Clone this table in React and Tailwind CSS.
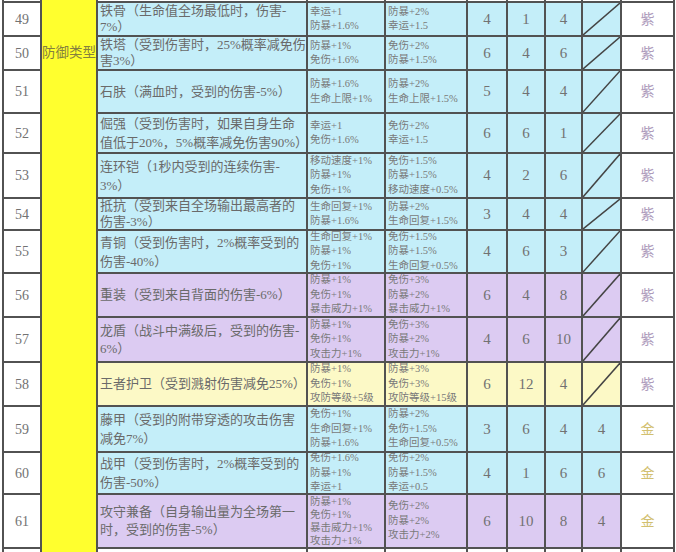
const CYAN = "bg-[#c4eef9]"
const PURPLE = "bg-[#dccbf2]"
const YELLOW = "bg-[#fcf9c6]"

const rows = [
  { n: 49, bg: CYAN, lh: "leading-[16px]", d: ["铁骨（生命值全场最低时，伤害-", "7%）"], a: ["幸运+1", "防暴+1.6%"], b: ["防暴+2%", "幸运+1.5"], v: [4, 1, 4], x: null, g: "紫" },
  { n: 50, bg: CYAN, lh: "leading-[16px]", d: ["铁塔（受到伤害时，25%概率减免伤", "害3%）"], a: ["防暴+1%", "免伤+1.6%"], b: ["免伤+2%", "防暴+1.5%"], v: [6, 4, 6], x: null, g: "紫" },
  { n: 51, bg: CYAN, lh: "leading-[18px]", d: ["石肤（满血时，受到的伤害-5%）"], a: ["防暴+1.6%", "生命上限+1%"], b: ["防暴+2%", "生命上限+1.5%"], v: [5, 4, 4], x: null, g: "紫" },
  { n: 52, bg: CYAN, lh: "leading-[19px]", d: ["倔强（受到伤害时，如果自身生命", "值低于20%，5%概率减免伤害90%）"], a: ["幸运+1", "免伤+1.6%"], b: ["免伤+2%", "幸运+1.5"], v: [6, 6, 1], x: null, g: "紫" },
  { n: 53, bg: CYAN, lh: "leading-[19px]", d: ["连环铠（1秒内受到的连续伤害-", "3%）"], a: ["移动速度+1%", "防暴+1%", "免伤+1%"], b: ["免伤+1.5%", "防暴+1.5%", "移动速度+0.5%"], v: [4, 2, 6], x: null, g: "紫" },
  { n: 54, bg: CYAN, lh: "leading-[16px]", d: ["抵抗（受到来自全场输出最高者的", "伤害-3%）"], a: ["生命回复+1%", "防暴+1.6%"], b: ["防暴+2%", "生命回复+1.5%"], v: [3, 4, 4], x: null, g: "紫" },
  { n: 55, bg: CYAN, lh: "leading-[19px]", d: ["青铜（受到伤害时，2%概率受到的", "伤害-40%）"], a: ["生命回复+1%", "防暴+1%", "免伤+1%"], b: ["免伤+1.5%", "防暴+1.5%", "生命回复+0.5%"], v: [4, 6, 3], x: null, g: "紫" },
  { n: 56, bg: PURPLE, lh: "leading-[18px]", d: ["重装（受到来自背面的伤害-6%）"], a: ["防暴+1%", "免伤+1%", "暴击威力+1%"], b: ["免伤+3%", "防暴+2%", "暴击威力+1%"], v: [6, 4, 8], x: null, g: "紫" },
  { n: 57, bg: PURPLE, lh: "leading-[18px]", d: ["龙盾（战斗中满级后，受到的伤害-", "6%）"], a: ["防暴+1%", "免伤+1%", "攻击力+1%"], b: ["免伤+3%", "防暴+2%", "攻击力+1%"], v: [4, 6, 10], x: null, g: "紫" },
  { n: 58, bg: YELLOW, lh: "leading-[18px]", d: ["王者护卫（受到溅射伤害减免25%）"], a: ["防暴+1%", "免伤+1%", "攻防等级+5级"], b: ["防暴+3%", "免伤+3%", "攻防等级+15级"], v: [6, 12, 4], x: null, g: "紫" },
  { n: 59, bg: CYAN, lh: "leading-[19px]", d: ["藤甲（受到的附带穿透的攻击伤害", "减免7%）"], a: ["免伤+1%", "生命回复+1%", "防暴+1.6%"], b: ["防暴+2%", "免伤+1.5%", "生命回复+0.5%"], v: [3, 6, 4], x: 4, g: "金" },
  { n: 60, bg: CYAN, lh: "leading-[19px]", d: ["战甲（受到伤害时，2%概率受到的", "伤害-50%）"], a: ["免伤+1.6%", "防暴+1%", "幸运+1"], b: ["免伤+2%", "防暴+1.5%", "幸运+0.5"], v: [4, 1, 6], x: 6, g: "金" },
  { n: 61, bg: PURPLE, lh: "leading-[18px]", d: ["攻守兼备（自身输出量为全场第一", "时，受到的伤害-5%）"], a: ["防暴+1%", "免伤+1%", "暴击威力+1%", "攻击力+1%"], b: ["免伤+2%", "防暴+2%", "攻击力+2%"], v: [6, 10, 8], x: 4, g: "金" },
]

function Lines({ items, className }) {
  return (
    <div className={className}>
      {items.map((t, i) => (
        <div key={i} className="whitespace-nowrap">{t}</div>
      ))}
    </div>
  )
}

function Num({ bg, children }) {
  return (
    <div className={`${bg} flex items-center justify-center text-[15px] text-[#727272]`}>{children}</div>
  )
}

function Slash({ bg }) {
  return (
    <div className={bg}>
      <svg className="block w-full h-full" viewBox="0 0 100 100" preserveAspectRatio="none">
        <line x1="0" y1="100" x2="100" y2="0" stroke="#444" strokeWidth="1.5" vectorEffect="non-scaling-stroke" />
      </svg>
    </div>
  )
}

function Row({ r }) {
  const statLead = r.a.length > 3 ? "leading-[13px]" : "leading-[14.5px]"
  return (
    <>
      <div className="bg-white flex items-center justify-center text-[14px] text-[#727272]">{r.n}</div>
      <div className={`${r.bg} flex items-center pl-[2px]`}>
        <Lines items={r.d} className={`text-[13px] ${r.lh} text-[#6a6a6a]`} />
      </div>
      <div className={`${r.bg} flex items-center pl-[2px] overflow-hidden`}>
        <Lines items={r.a} className={`text-[10.5px] ${statLead} text-[#7a7a7a]`} />
      </div>
      <div className={`${r.bg} flex items-center pl-[2px] overflow-hidden`}>
        <Lines items={r.b} className="text-[10.5px] leading-[14.5px] text-[#7a7a7a]" />
      </div>
      <Num bg={r.bg}>{r.v[0]}</Num>
      <Num bg={r.bg}>{r.v[1]}</Num>
      <Num bg={r.bg}>{r.v[2]}</Num>
      {r.x === null ? <Slash bg={r.bg} /> : <Num bg={r.bg}>{r.x}</Num>}
      <div
        className={`bg-white flex items-center justify-center text-[14px] ${
          r.g === "紫" ? "text-[#ae9cbc]" : "text-[#d2c070]"
        }`}
      >
        {r.g}
      </div>
    </>
  )
}

export default function App() {
  const blanks = Array.from({ length: 9 })
  return (
    <div className="w-[676px] h-[552px] overflow-hidden bg-white [font-family:'Liberation_Serif','Noto_Sans_CJK_SC',serif]">
      <div className="ml-[2px] w-[673px] px-[2px] bg-[#525252] grid gap-[2px] grid-cols-[36px_54px_208px_76px_80px_38px_36px_35px_37px_51px] grid-rows-[1px_32px_32px_41px_38px_43px_30px_41px_42px_43px_42px_44px_40px_52px_40px]">
        {/* category column spans every row */}
        <div className="col-start-2 row-[1/16] bg-[#ffff2e] flex justify-center pt-[45px]">
          <span className="whitespace-nowrap text-[13.5px] leading-[16px] text-[#85803e]">防御类型</span>
        </div>

        {blanks.map((_, i) => (
          <div key={`top-${i}`} className="bg-white" />
        ))}

        {rows.map((r) => (
          <Row key={r.n} r={r} />
        ))}

        {blanks.map((_, i) => (
          <div key={`end-${i}`} className="bg-white" />
        ))}
      </div>
    </div>
  )
}
